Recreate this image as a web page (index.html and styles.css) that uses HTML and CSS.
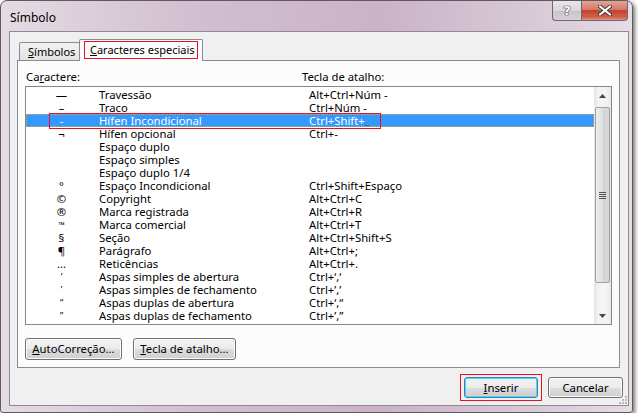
FILE: index.html
```html
<!DOCTYPE html>
<html lang="pt">
<head>
<meta charset="utf-8">
<title>Símbolo</title>
<link rel="stylesheet" href="styles.css">
</head>
<body>
<div class="window">
  <div class="titlebar">
    <span class="title">Símbolo</span>
    <div class="caption">
      <div class="cap-btn help"><span>?</span></div>
      <div class="cap-btn close"><svg width="14" height="11" viewBox="0 0 14 11"><path d="M2 1.5 L12 9.5 M12 1.5 L2 9.5" stroke="#3a3a3a" stroke-width="4" stroke-linecap="round"/><path d="M2 1.5 L12 9.5 M12 1.5 L2 9.5" stroke="#fff" stroke-width="2.2" stroke-linecap="round"/></svg></div>
    </div>
  </div>
  <div class="client">
    <div class="tabs">
      <div class="tab"><u>S</u>ímbolos</div>
      <div class="tab active"><span class="mark"><u>C</u>aracteres especiais</span></div>
    </div>
    <div class="panel">
      <div class="headers">
        <span class="h1">Ca<u>r</u>actere:</span>
        <span class="h2">Tecla de atalho:</span>
      </div>
      <div class="list">
        <div class="rows">
          <div class="row"><span class="c">—</span><span class="n">Travessão</span><span class="k">Alt+Ctrl+Núm -</span></div>
          <div class="row"><span class="c">–</span><span class="n">Traco</span><span class="k">Ctrl+Núm -</span></div>
          <div class="row sel"><span class="c">-</span><span class="n">Hífen Incondicional</span><span class="k">Ctrl+Shift+<span class="us">_</span></span><span class="redbox"></span></div>
          <div class="row"><span class="c">¬</span><span class="n">Hífen opcional</span><span class="k">Ctrl+-</span></div>
          <div class="row"><span class="c"></span><span class="n">Espaço duplo</span><span class="k"></span></div>
          <div class="row"><span class="c"></span><span class="n">Espaço simples</span><span class="k"></span></div>
          <div class="row"><span class="c"></span><span class="n">Espaço duplo 1/4</span><span class="k"></span></div>
          <div class="row"><span class="c">°</span><span class="n">Espaço Incondicional</span><span class="k">Ctrl+Shift+Espaço</span></div>
          <div class="row"><span class="c">©</span><span class="n">Copyright</span><span class="k">Alt+Ctrl+C</span></div>
          <div class="row"><span class="c">®</span><span class="n">Marca registrada</span><span class="k">Alt+Ctrl+R</span></div>
          <div class="row"><span class="c tm">™</span><span class="n">Marca comercial</span><span class="k">Alt+Ctrl+T</span></div>
          <div class="row"><span class="c">§</span><span class="n">Seção</span><span class="k">Alt+Ctrl+Shift+S</span></div>
          <div class="row"><span class="c">¶</span><span class="n">Parágrafo</span><span class="k">Alt+Ctrl+;</span></div>
          <div class="row"><span class="c">…</span><span class="n">Reticências</span><span class="k">Alt+Ctrl+.</span></div>
          <div class="row"><span class="c q">‘</span><span class="n">Aspas simples de abertura</span><span class="k">Ctrl+‘,‘</span></div>
          <div class="row"><span class="c q">’</span><span class="n">Aspas simples de fechamento</span><span class="k">Ctrl+’,’</span></div>
          <div class="row"><span class="c q">“</span><span class="n">Aspas duplas de abertura</span><span class="k">Ctrl+‘,“</span></div>
          <div class="row"><span class="c q">”</span><span class="n">Aspas duplas de fechamento</span><span class="k">Ctrl+’,”</span></div>
        </div>
        <div class="scrollbar">
          <div class="arrow up"><svg width="7" height="4" viewBox="0 0 7 4"><path d="M0 4 L3.5 0 L7 4Z" fill="#444"/></svg></div>
          <div class="track">
            <div class="thumb"><span class="grip"></span></div>
          </div>
          <div class="arrow down"><svg width="7" height="4" viewBox="0 0 7 4"><path d="M0 0 L3.5 4 L7 0Z" fill="#444"/></svg></div>
        </div>
      </div>
      <div class="panel-buttons">
        <button class="btn w96"><u>A</u>utoCorreção...</button>
        <button class="btn w103"><u>T</u>ecla de atalho...</button>
      </div>
    </div>
    <div class="footer">
      <button class="btn default"><u>I</u>nserir</button>
      <button class="btn cancel">Cancelar</button>
    </div>
    <svg class="grip-corner" width="9" height="9" viewBox="0 0 9 9">
      <g fill="#b8b8b8"><rect x="7" y="1" width="2" height="2"/><rect x="4" y="4" width="2" height="2"/><rect x="7" y="4" width="2" height="2"/><rect x="1" y="7" width="2" height="2"/><rect x="4" y="7" width="2" height="2"/><rect x="7" y="7" width="2" height="2"/></g>
    </svg>
  </div>
</div>
</body>
</html>
```

FILE: styles.css
```css
* { box-sizing: border-box; }
html, body { margin: 0; padding: 0; background: #ffffff; }
body {
  font-family: "Noto Sans", "Open Sans", sans-serif;
  font-size: 11.3px;
  color: #000;
}
u { text-decoration: underline; text-underline-offset: 1px; }

.window {
  width: 633px;
  height: 413px;
  border: 1px solid #5e5a5e;
  border-radius: 7px 7px 3px 3px;
  background: linear-gradient(to right, #e4dbe3 0%, #d3bfd1 30%, #cbb2c8 60%, #dccfdb 90%, #e6dde5 100%);
  box-shadow: 2px 2px 4px rgba(0,0,0,0.55);
  padding: 0 3px 6px 8px;
  display: flex;
  flex-direction: column;
}

.titlebar {
  height: 30px;
  flex: none;
  display: flex;
  align-items: flex-start;
}
.title {
  margin-top: 8px;
  margin-left: 1px;
  font-size: 12px;
  color: #000;
}
.caption {
  margin-left: auto;
  margin-right: 1px;
  display: flex;
}
.cap-btn {
  height: 20px;
  border: 1px solid #6a6a70;
  border-top: none;
  display: flex;
  align-items: center;
  justify-content: center;
}
.help {
  width: 29px;
  border-radius: 0 0 0 4px;
  border-right: none;
  background: linear-gradient(#e9e6ea 0%, #dcd6dc 50%, #c9c2c9 51%, #d8d2d8 100%);
}
.help span {
  font-family: "DejaVu Sans", sans-serif;
  font-weight: bold;
  font-size: 13px;
  color: #fff;
  text-shadow: 0 0 1px #333, 0 0 1px #333, 0 0 1px #333;
}
.close {
  width: 47px;
  border-radius: 0 0 4px 0;
  background: linear-gradient(#e4a493 0%, #d7786a 45%, #c7432f 50%, #d0604c 85%, #e1988a 100%);
}

.client {
  flex: 1;
  border: 1px solid #8e8a8e;
  background: #f0f0f0;
  display: flex;
  flex-direction: column;
  position: relative;
}

.tabs {
  display: flex;
  align-items: flex-end;
  margin-top: 7px;
  margin-left: 9px;
  height: 21px;
  position: relative;
  z-index: 1;
}
.tab {
  height: 18px;
  width: 61px;
  padding: 0 0 0 8px;
  border: 1px solid #898c95;
  border-bottom: none;
  border-radius: 2px 2px 0 0;
  background: linear-gradient(#f2f2f2, #e3e3e3);
  line-height: 17px;
  white-space: nowrap;
  font-size: 11px;
}
.tab.active {
  width: 124px;
  height: 22px;
  margin-bottom: -1px;
  margin-left: -1px;
  padding: 1px 4px 0 4px;
  background: #fcfcfc;
  line-height: 16px;
}
.tab .mark {
  display: block;
  border: 1px solid #e81123;
  padding: 0 0 0 5px;
  height: 18px;
  line-height: 16px;
}

.panel {
  margin: 0 8px 0 7px;
  height: 308px;
  border: 1px solid #898c95;
  background: #fcfcfc;
  padding: 0 7px 0 7px;
  display: flex;
  flex-direction: column;
}
.headers {
  display: flex;
  height: 25px;
  padding-top: 8px;
  line-height: 15px;
}
.h1 { width: 277px; padding-left: 1px; }

.list {
  height: 239px;
  border: 1px solid #828790;
  background: #fff;
  display: flex;
}
.rows {
  flex: 1;
  padding-top: 1px;
}
.row {
  height: 13px;
  display: flex;
  line-height: 13px;
  white-space: nowrap;
  position: relative;
}
.row .c { width: 73px; text-align: center; padding-right: 2px; }
.row .c.tm { font-size: 8px; }
.row .c.q { font-size: 9px; }
.row .n { width: 210px; }
.row .us { display: inline-block; transform: translateY(-1px); color: #555; }
.row.sel {
  background: #3399ff;
  color: #fff;
  outline: 1px dotted #e8a040;
  outline-offset: -1px;
}
.redbox {
  position: absolute;
  left: 23px;
  top: -1px;
  width: 332px;
  height: 16px;
  border: 1px solid #e81123;
}

.scrollbar {
  width: 17px;
  background: linear-gradient(to right, #e6e6e6, #f4f4f4 30%, #f4f4f4 70%, #e9e9e9);
  display: flex;
  flex-direction: column;
}
.arrow {
  height: 17px;
  display: flex;
  align-items: center;
  justify-content: center;
}
.track {
  flex: 1;
  padding: 3px 1px 0 1px;
}
.thumb {
  height: 176px;
  border: 1px solid #a0a0a0;
  border-radius: 2px;
  background: linear-gradient(to right, #ececec, #e0e0e0 50%, #d2d2d2 51%, #d8d8d8);
  display: flex;
  align-items: center;
  justify-content: center;
}
.grip {
  width: 7px;
  height: 7px;
  background: repeating-linear-gradient(#555 0 1px, transparent 1px 2px);
}

.panel-buttons {
  display: flex;
  gap: 11px;
  margin-top: 13px;
}

.btn {
  font-family: inherit;
  font-size: 11.3px;
  color: #000;
  height: 22px;
  border: 1px solid #707070;
  border-radius: 3px;
  background: linear-gradient(#f2f2f2 0%, #ebebeb 50%, #dddddd 51%, #cfcfcf 100%);
  box-shadow: inset 0 0 0 1px #fcfcfc;
  padding: 0;
  line-height: 18px;
  position: relative;
}
.btn.w96 { width: 97px; }
.btn.w103 { width: 103px; }

.footer {
  display: flex;
  justify-content: flex-end;
  gap: 10px;
  margin-top: 9px;
  margin-right: 5px;
}
.footer .btn { height: 21px; }
.btn.default {
  width: 74px;
  border-color: #3c7fb1;
  box-shadow: inset 0 0 0 1px #48d8fb;
}
.btn.default::after {
  content: "";
  position: absolute;
  left: -5px;
  top: -4px;
  right: -5px;
  bottom: -4px;
  border: 1px solid #e81123;
}
.btn.cancel { width: 75px; }

.grip-corner {
  position: absolute;
  right: 1px;
  bottom: 1px;
}
```
